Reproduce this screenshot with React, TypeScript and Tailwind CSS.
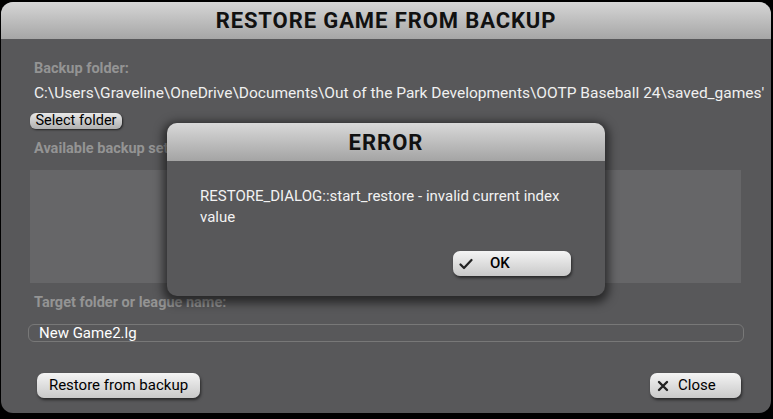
import * as React from "react";

const font = { fontFamily: "Roboto, 'Liberation Sans', sans-serif" };

function PillButton({ children, className = "" }: { children: React.ReactNode; className?: string }) {
  return (
    <div
      className={
        "flex items-center rounded-[7px] bg-gradient-to-b from-[#f4f4f4] to-[#c9c9c9] text-black shadow-[1px_2px_3px_rgba(0,0,0,0.55)] " +
        className
      }
    >
      {children}
    </div>
  );
}

function Label({ children }: { children: React.ReactNode }) {
  return (
    <div className="flex h-[16px] items-center pl-[4px] text-[14.5px] font-bold leading-none text-[#949494]">
      {children}
    </div>
  );
}

export default function App() {
  return (
    <div className="relative h-[419px] w-[773px] overflow-hidden bg-black" style={font}>
      {/* main window */}
      <div className="mt-[2px] ml-[1px] flex h-[411px] w-[770px] flex-col overflow-hidden rounded-[12px] bg-[#58585a]">
        <div className="flex h-[37px] shrink-0 items-center justify-center bg-gradient-to-b from-[#d6d6d6] to-[#a6a6a6]">
          <span className="text-[22px] font-bold tracking-[0.9px] text-[#111]">RESTORE GAME FROM BACKUP</span>
        </div>

        <div className="flex flex-col px-[29px] pt-[22px]">
          <Label>Backup folder:</Label>
          <div className="mt-[9px] flex h-[16px] items-center whitespace-nowrap pl-[4px] text-[15.5px] leading-none text-[#f0f0f0]">
            C:\Users\Graveline\OneDrive\Documents\Out of the Park Developments\OOTP Baseball 24\saved_games'
          </div>
          <div className="mt-[11px] flex">
            <div className="flex h-[16px] w-[92px] items-center justify-center rounded-[6px] bg-gradient-to-b from-[#e8e8e8] to-[#b0b0b0] text-[14.5px] leading-none text-black shadow-[1px_1px_2px_rgba(0,0,0,0.6)]">
              Select folder
            </div>
          </div>
          <div className="mt-[12px]">
            <Label>Available backup sets:</Label>
          </div>
          <div className="mt-[13px] h-[113px] w-[711px] bg-[#666668]" />
          <div className="mt-[12px]">
            <Label>Target folder or league name:</Label>
          </div>
          <div className="-ml-[2px] mt-[13px] flex h-[18px] w-[716px] items-center rounded-[6px] border border-[#787878] pl-[10px] text-[15px] leading-none text-white">
            New Game2.lg
          </div>
          <div className="mt-[31px] flex items-center justify-between pl-[7px] pr-[1px]">
            <PillButton className="h-[25px] w-[163px] justify-center text-[15px]">Restore from backup</PillButton>
            <PillButton className="h-[25px] w-[91px] gap-[9px] pl-[7px] text-[15px]">
              <svg width="12" height="12" viewBox="0 0 12 12" className="shrink-0">
                <path d="M2 2 L10 10 M10 2 L2 10" stroke="#222" strokeWidth="2.4" strokeLinecap="round" />
              </svg>
              <span>Close</span>
            </PillButton>
          </div>
        </div>
      </div>

      {/* error dialog */}
      <div className="absolute left-[167px] top-[123px] flex h-[173px] w-[438px] flex-col overflow-hidden rounded-[10px] bg-[#58585a] shadow-[0_3px_10px_4px_rgba(0,0,0,0.55)]">
        <div className="flex h-[38px] shrink-0 items-center justify-center bg-gradient-to-b from-[#d9d9d9] to-[#a4a4a4]">
          <span className="text-[22px] font-bold tracking-[1px] text-[#111]">ERROR</span>
        </div>
        <div className="flex flex-1 flex-col px-[33px] pt-[25px]">
          <div className="text-[15px] leading-[21px] text-[#f2f2f2]">
            RESTORE_DIALOG::start_restore - invalid current index value
          </div>
          <div className="mt-[23px] flex justify-end pr-[1px]">
            <PillButton className="h-[25px] w-[118px] gap-[17px] pl-[6px] text-[15px]">
              <svg width="14" height="12" viewBox="0 0 14 12" className="shrink-0">
                <path d="M1.5 6.5 L5 10 L12.5 2" fill="none" stroke="#222" strokeWidth="2.2" strokeLinecap="round" strokeLinejoin="round" />
              </svg>
              <span className="font-medium">OK</span>
            </PillButton>
          </div>
        </div>
      </div>
    </div>
  );
}
